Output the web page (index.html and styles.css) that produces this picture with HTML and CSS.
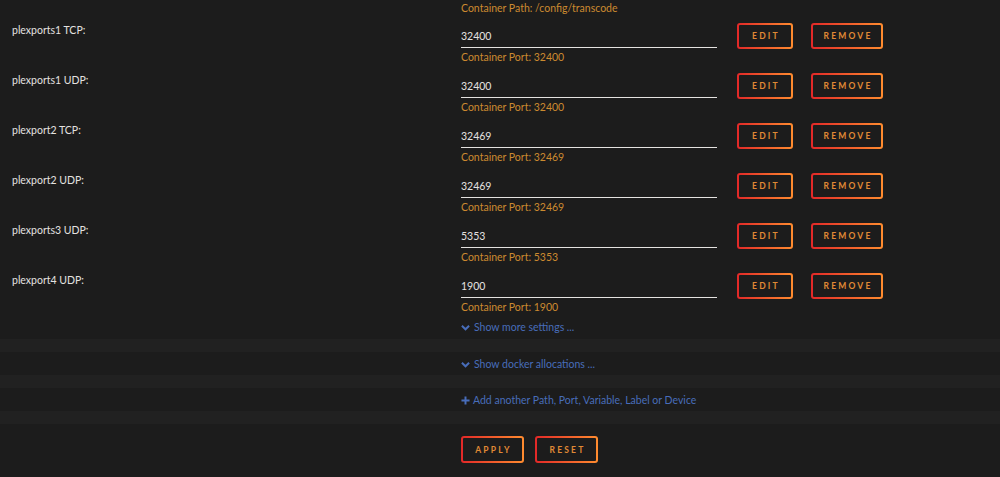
FILE: index.html
```html
<!DOCTYPE html>
<html lang="en">
<head>
    <meta charset="UTF-8">
    <meta name="viewport" content="width=device-width, initial-scale=1.0">
    <title>Update Container</title>
    <link rel="stylesheet" href="styles.css">
</head>
<body>
    <div class="row top">
        <div class="label"></div>
        <div class="field"><span class="hint">Container Path: /config/transcode</span></div>
    </div>

    <!-- PORTS -->
    <div class="row">
        <div class="label">plexports1 TCP:</div>
        <div class="field">
            <div class="input-wrap">
                <input class="value" type="text" value="32400">
                <span class="hint">Container Port: 32400</span>
            </div>
            <button class="btn">Edit</button>
            <button class="btn btn-wide">Remove</button>
        </div>
    </div>
    <div class="row">
        <div class="label">plexports1 UDP:</div>
        <div class="field">
            <div class="input-wrap">
                <input class="value" type="text" value="32400">
                <span class="hint">Container Port: 32400</span>
            </div>
            <button class="btn">Edit</button>
            <button class="btn btn-wide">Remove</button>
        </div>
    </div>
    <div class="row">
        <div class="label">plexport2 TCP:</div>
        <div class="field">
            <div class="input-wrap">
                <input class="value" type="text" value="32469">
                <span class="hint">Container Port: 32469</span>
            </div>
            <button class="btn">Edit</button>
            <button class="btn btn-wide">Remove</button>
        </div>
    </div>
    <div class="row">
        <div class="label">plexport2 UDP:</div>
        <div class="field">
            <div class="input-wrap">
                <input class="value" type="text" value="32469">
                <span class="hint">Container Port: 32469</span>
            </div>
            <button class="btn">Edit</button>
            <button class="btn btn-wide">Remove</button>
        </div>
    </div>
    <div class="row">
        <div class="label">plexports3 UDP:</div>
        <div class="field">
            <div class="input-wrap">
                <input class="value" type="text" value="5353">
                <span class="hint">Container Port: 5353</span>
            </div>
            <button class="btn">Edit</button>
            <button class="btn btn-wide">Remove</button>
        </div>
    </div>
    <div class="row">
        <div class="label">plexport4 UDP:</div>
        <div class="field">
            <div class="input-wrap">
                <input class="value" type="text" value="1900">
                <span class="hint">Container Port: 1900</span>
            </div>
            <button class="btn">Edit</button>
            <button class="btn btn-wide">Remove</button>
        </div>
    </div>

    <!-- LINKS -->
    <div class="row link-row">
        <div class="label"></div>
        <div class="field">
            <a href="#" class="more">
                <svg class="icon" viewBox="0 0 10 10"><path d="M1 3 L5 7 L9 3" /></svg>Show more settings ...
            </a>
        </div>
    </div>
    <div class="band"></div>
    <div class="row link-row">
        <div class="label"></div>
        <div class="field">
            <a href="#" class="more">
                <svg class="icon" viewBox="0 0 10 10"><path d="M1 3 L5 7 L9 3" /></svg>Show docker allocations ...
            </a>
        </div>
    </div>
    <div class="band"></div>
    <div class="row link-row">
        <div class="label"></div>
        <div class="field">
            <a href="#" class="more">
                <svg class="icon icon-plus" viewBox="0 0 10 10"><path d="M5 0.5 V9.5 M0.5 5 H9.5" /></svg>Add another Path, Port, Variable, Label or Device
            </a>
        </div>
    </div>
    <div class="band"></div>

    <!-- ACTIONS -->
    <div class="row actions">
        <div class="label"></div>
        <div class="field">
            <button class="btn btn-action">Apply</button>
            <button class="btn btn-action">Reset</button>
        </div>
    </div>
</body>
</html>
```

FILE: styles.css
```css
body {
    margin: 0;
    background-color: #1c1c1c;
    font-family: Lato, "Open Sans", sans-serif;
    font-size: 10.5px;
    color: #e4e2e0;
}
.row {
    display: grid;
    grid-template-columns: 449px 1fr;
    padding-left: 12px;
    height: 50px;
}
.row.top {
    height: 14px;
}
.label {
    padding-top: 8px;
    line-height: 16px;
}
.field {
    display: flex;
    align-items: flex-start;
}
.top .field {
    line-height: 14px;
}
.input-wrap {
    width: 256px;
    margin-right: 20px;
}
.value {
    display: block;
    box-sizing: border-box;
    width: 256px;
    height: 23px;
    margin-top: 11px;
    padding: 0;
    border: none;
    border-bottom: 1px solid #e4e2e0;
    background: transparent;
    color: #e4e2e0;
    font-family: inherit;
    font-size: 10.5px;
}
.hint {
    display: block;
    padding-top: 1px;
    line-height: 16px;
    color: #cc8a30;
}
.top .hint {
    padding-top: 0;
}
.btn {
    box-sizing: border-box;
    width: 56px;
    height: 26px;
    margin-top: 9px;
    margin-right: 18px;
    padding: 0 0 0 2px;
    border: 2px solid transparent;
    border-radius: 3px;
    background: linear-gradient(#1c1c1c, #1c1c1c) padding-box,
                linear-gradient(90deg, #e22828, #ff8c2f) border-box;
    color: #e08a35;
    font-family: inherit;
    font-size: 8.5px;
    font-weight: bold;
    letter-spacing: 2.2px;
    text-transform: uppercase;
    cursor: pointer;
}
.btn-wide {
    width: 72px;
}
.link-row {
    height: 25px;
}
.link-row .field {
    line-height: 18px;
    padding-top: 4px;
}
.link-row + .band + .link-row {
    height: 23px;
}
.link-row + .band + .link-row .field {
    padding-top: 3px;
}
.more {
    color: #486dba;
    text-decoration: none;
}
.icon {
    width: 9px;
    height: 9px;
    margin-right: 4px;
    vertical-align: -1px;
    fill: none;
    stroke: #486dba;
    stroke-width: 2.2;
}
.icon-plus {
    margin-right: 3px;
}
.band {
    height: 13px;
    background-color: #212121;
}
.actions {
    height: 52px;
}
.btn-action {
    width: 63px;
    height: 27px;
    margin-top: 12px;
    margin-right: 11px;
}
```
